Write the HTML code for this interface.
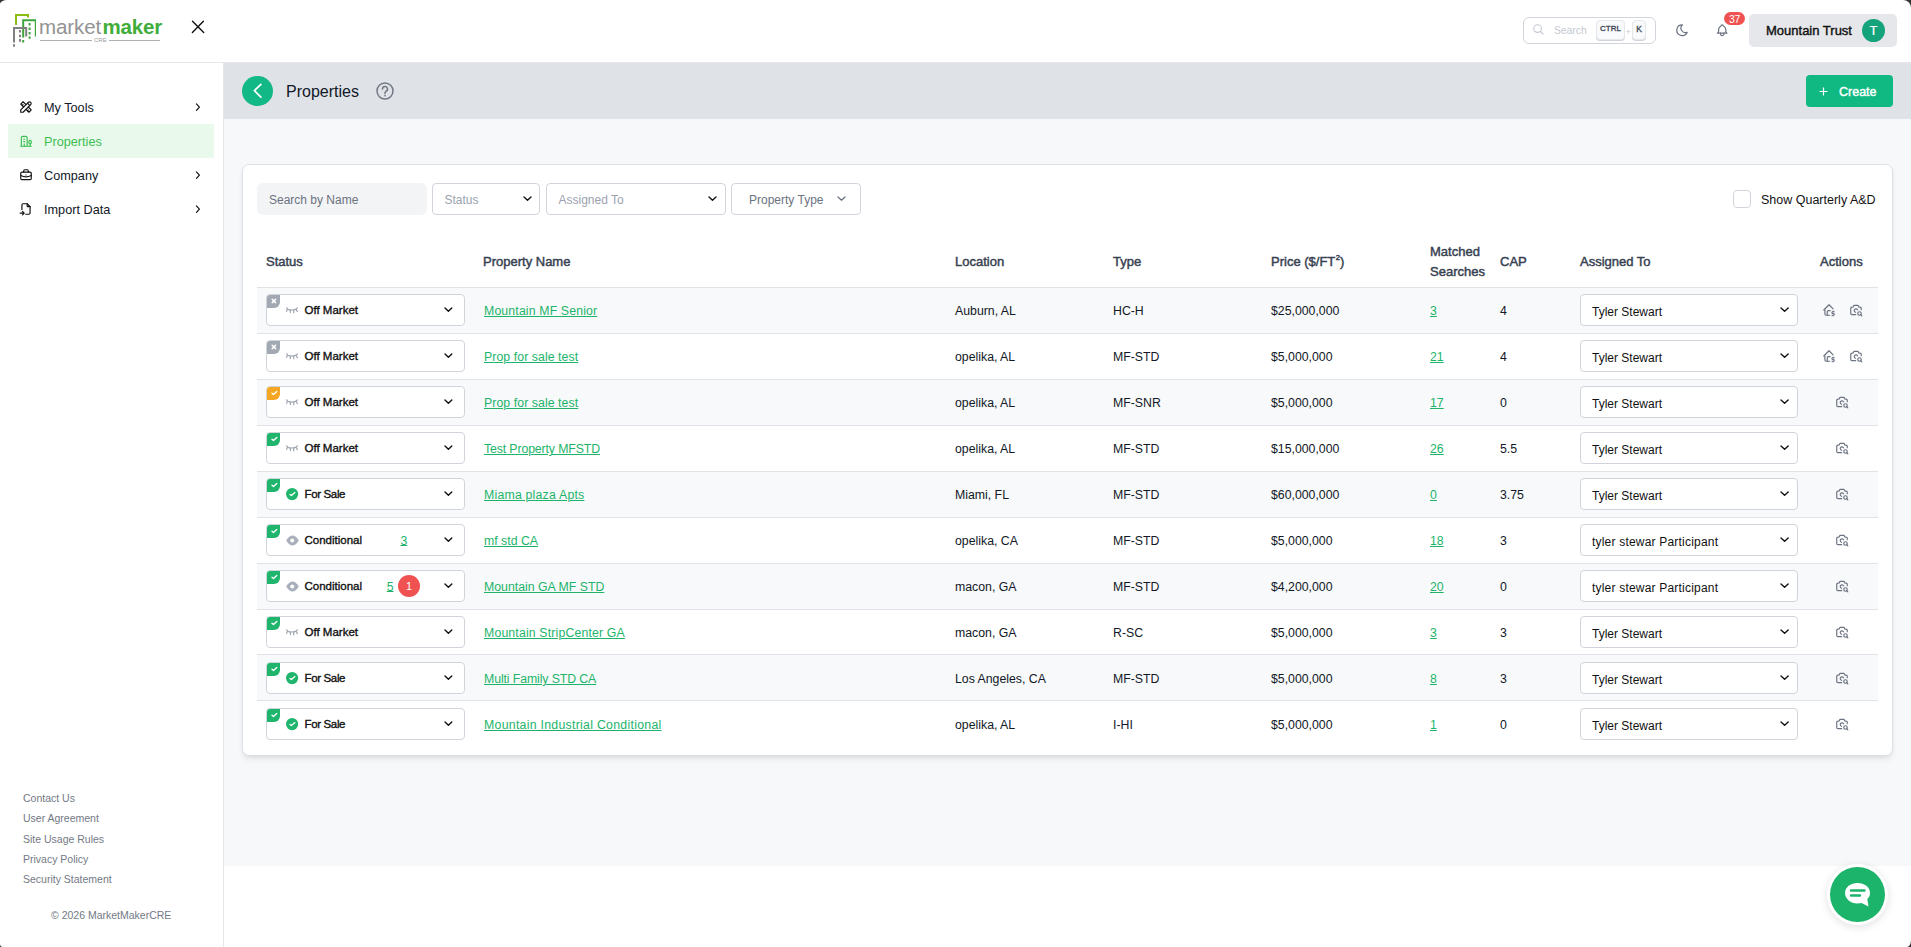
<!DOCTYPE html><html><head><meta charset="utf-8"><style>
*{box-sizing:border-box;margin:0;padding:0}
html,body{width:1911px;height:947px;overflow:hidden;background:#fff;font-family:"Liberation Sans",sans-serif;color:#111827}
body{position:relative}
.a{position:absolute}
svg{display:block}
.hdr{left:0;top:0;width:1911px;height:63px;border-bottom:1px solid #e5e7eb;background:#fff}
.side{left:0;top:63px;width:224px;height:884px;border-right:1px solid #e5e7eb;background:#fff}
.main{left:224px;top:63px;width:1687px;height:803px;background:#f7f8fa}
.band{left:224px;top:63px;width:1687px;height:56px;background:#dfe2e7}
.nav{left:8px;width:206px;height:34px}
.nav .ic{position:absolute;left:11px;top:10px}
.nav .tx{position:absolute;left:36px;top:0;height:34px;padding-top:2px;display:flex;align-items:center;font-size:12.7px;color:#111827}
.nav .chev{position:absolute;left:187px;top:13.2px}
.nav.act{background:#e9f9ec}
.nav.act .tx{color:#3cbf52}
.foot{left:23px;font-size:10.5px;color:#737985;height:14px;display:flex;align-items:center;white-space:nowrap}
.card{left:242px;top:164px;width:1651px;height:592px;background:#fff;border:1px solid #dde0e5;border-radius:7px;box-shadow:0 4px 6px -1px rgba(0,0,0,.08),0 2px 4px -2px rgba(0,0,0,.08)}
.flt{top:183px;height:32px;border:1px solid #d1d5db;border-radius:4px;background:#fff;font-size:12px;color:#9ca3af}
.flt .t{position:absolute;left:11.5px;top:0;height:30px;padding-top:2px;display:flex;align-items:center;white-space:nowrap}
.flt .dd{position:absolute;top:13px}
.th{font-size:13px;font-weight:400;-webkit-text-stroke:0.45px #374151;color:#374151;height:20px;padding-top:0px;display:flex;align-items:center;white-space:nowrap}
.row{left:257px;width:1621px;height:46px;border-top:1px solid transparent}
.ln{left:257px;width:1621px;height:1px;background:#dfe3e8}
.stripe{left:257px;width:1621px;background:#f8f9fa}
.cell{position:absolute;top:0;height:44.875px;padding-top:2px;display:flex;align-items:center;font-size:12.3px;color:#111827;white-space:nowrap}
.lnk{color:#1db46a;text-decoration:underline;text-underline-offset:1px;text-decoration-thickness:1px}
.sel{position:absolute;top:6px;left:9px;width:199px;height:32px;border:1px solid #d1d5db;border-radius:4px;background:#fff}
.sel .cb{position:absolute;left:0;top:0;width:13px;height:12.5px;border-radius:3px 0 6px 0;overflow:hidden}
.sel .st{position:absolute;left:37.5px;top:0;height:30px;padding-top:0px;display:flex;align-items:center;font-size:11.5px;font-weight:400;-webkit-text-stroke:0.35px #111;color:#111;white-space:nowrap}
.sel .si{position:absolute;left:19px;top:9px}
.sel .dd{position:absolute;left:178px;top:12px}
.asg{position:absolute;top:6px;left:1323px;width:218px;height:32px;border:1px solid #d1d5db;border-radius:4px;background:#fff}
.asg .t{position:absolute;left:11px;top:0;height:30px;padding-top:4px;display:flex;align-items:center;font-size:12px;color:#111;white-space:nowrap}
.asg .dd{position:absolute;left:200px;top:12px}
.act1{position:absolute;top:14.8px}
</style></head><body>
<div class="a hdr"></div><div class="a side"></div><div class="a main"></div><div class="a band"></div>
<svg class="a" style="left:12px;top:13px" width="24" height="35" viewBox="12 13 24 35">
<path d="M16 25 V15 H28 V17.5" fill="none" stroke="#8cbd12" stroke-width="2"/>
<path d="M23.2 37.5 V20.2 H35.8 V36.5" fill="none" stroke="#3da53a" stroke-width="2"/>
<path d="M29.6 23 V25.5 M29.6 27.5 V30 M29.6 32 V34.5 M29.6 36.5 V38.7 M23.2 40 V42.6" stroke="#3da53a" stroke-width="2"/>
<path d="M14 42.6 V27.9 H26.2 V36.5" fill="none" stroke="#808080" stroke-width="2"/>
<path d="M20 30 V32.6 M20 34.7 V37.3 M20 39.1 V41.7 M14 44.2 V46.8" stroke="#808080" stroke-width="2"/>
</svg>
<div class="a" style="left:39px;top:14px;height:26px;white-space:nowrap;font-size:20.5px;line-height:26px;letter-spacing:-0.1px;color:#939393">market</div>
<div class="a" style="left:102.5px;top:14px;height:26px;white-space:nowrap;font-size:20.5px;line-height:26px;letter-spacing:-0.2px;color:#40ad3b;font-weight:700">maker</div>
<div class="a" style="left:40px;top:40px;width:52px;height:1px;background:#b0b0b0"></div>
<div class="a" style="left:109px;top:40px;width:51px;height:1px;background:#b0b0b0"></div>
<div class="a" style="left:94px;top:37px;font-size:6px;line-height:6px;color:#9a9a9a;letter-spacing:0">CRE</div>

<svg class="a" style="left:190px;top:20px" width="15" height="15" viewBox="0 0 15 15"><path d="M2.5 1.3 L13.7 12.5 M13.4 1.3 L2.4 12.6" stroke="#111" stroke-width="1.4" stroke-linecap="round"/></svg>
<div class="a nav" style="top:90px"><div class="ic"><svg width="14" height="14" viewBox="0 0 24 24" fill="none" stroke="#111" stroke-width="2" stroke-linecap="round" stroke-linejoin="round"><path d="M3 21h4l13 -13a1.5 1.5 0 0 0 -4 -4l-13 13v4"/><path d="M14.5 5.5l4 4"/><path d="M12 8l-5 -5l-4 4l5 5"/><path d="M7 8l-1.5 1.5"/><path d="M16 12l5 5l-4 4l-5 -5"/><path d="M16 17l-1.5 1.5"/></svg></div><div class="tx">My Tools</div><div class="chev"><svg width="8" height="10" viewBox="0 0 8 10"><path d="M1.4 0.9 L4.4 4.1 L1.5 7.3" fill="none" stroke="#111" stroke-width="1.2" stroke-linecap="round" stroke-linejoin="round"/></svg></div></div>
<div class="a nav act" style="top:124px"><div class="ic"><svg width="14" height="14" viewBox="0 0 24 24" fill="none" stroke="#3cbf52" stroke-width="2" stroke-linecap="round" stroke-linejoin="round"><path d="M3 21h18"/><path d="M19 21v-4"/><path d="M19 17a2 2 0 0 0 2 -2v-2a2 2 0 1 0 -4 0v2a2 2 0 0 0 2 2z"/><path d="M14 21v-14a3 3 0 0 0 -3 -3h-4a3 3 0 0 0 -3 3v14"/><path d="M9 17v4"/><path d="M8 13h2"/><path d="M8 9h2"/></svg></div><div class="tx">Properties</div></div>
<div class="a nav" style="top:158px"><div class="ic"><svg width="14" height="14" viewBox="0 0 24 24" fill="none" stroke="#111" stroke-width="2" stroke-linecap="round" stroke-linejoin="round"><path d="M3 9a2 2 0 0 1 2 -2h14a2 2 0 0 1 2 2v9a2 2 0 0 1 -2 2h-14a2 2 0 0 1 -2 -2z"/><path d="M8 7v-2a2 2 0 0 1 2 -2h4a2 2 0 0 1 2 2v2"/><path d="M12 12l0 .01"/><path d="M3 13a20 20 0 0 0 18 0"/></svg></div><div class="tx">Company</div><div class="chev"><svg width="8" height="10" viewBox="0 0 8 10"><path d="M1.4 0.9 L4.4 4.1 L1.5 7.3" fill="none" stroke="#111" stroke-width="1.2" stroke-linecap="round" stroke-linejoin="round"/></svg></div></div>
<div class="a nav" style="top:192px"><div class="ic"><svg width="14" height="14" viewBox="0 0 24 24" fill="none" stroke="#111" stroke-width="2" stroke-linecap="round" stroke-linejoin="round"><path d="M14 3v4a1 1 0 0 0 1 1h4"/><path d="M5 13v-8a2 2 0 0 1 2 -2h7l5 5v11a2 2 0 0 1 -2 2h-5.5m-9.5 -2h7m-3 -3l3 3l-3 3"/></svg></div><div class="tx">Import Data</div><div class="chev"><svg width="8" height="10" viewBox="0 0 8 10"><path d="M1.4 0.9 L4.4 4.1 L1.5 7.3" fill="none" stroke="#111" stroke-width="1.2" stroke-linecap="round" stroke-linejoin="round"/></svg></div></div>
<div class="a foot" style="top:791px">Contact Us</div>
<div class="a foot" style="top:811px">User Agreement</div>
<div class="a foot" style="top:832px">Site Usage Rules</div>
<div class="a foot" style="top:852px">Privacy Policy</div>
<div class="a foot" style="top:872px">Security Statement</div>
<div class="a foot" style="left:51px;top:908px">© 2026 MarketMakerCRE</div>
<div class="a" style="left:1523px;top:17px;width:133px;height:27px;border:1px solid #d1d5db;border-radius:6px;background:#fff"></div>
<svg class="a" style="left:1533px;top:24px" width="11" height="11" viewBox="0 0 11 11"><circle cx="4.6" cy="4.6" r="3.8" fill="none" stroke="#c4c9d0" stroke-width="1.1"/><path d="M7.5 7.5 L10.2 10.2" stroke="#c4c9d0" stroke-width="1.1" stroke-linecap="round"/></svg>
<div class="a" style="left:1554px;top:21px;height:18px;display:flex;align-items:center;font-size:10.3px;color:#c4c9d0;padding-top:1px">Search</div>
<div class="a" style="left:1596px;top:20px;width:29px;height:20px;border:1px solid #e5e7eb;border-radius:4px;background:#f9fafb;box-shadow:0 1px 0 #d1d5db;display:flex;align-items:center;justify-content:center;font-size:8px;-webkit-text-stroke:0.3px #374151;color:#374151;padding-bottom:3px">CTRL</div>
<div class="a" style="left:1625.5px;top:22px;height:18px;display:flex;align-items:center;font-size:9.5px;color:#c9ced6">+</div>
<div class="a" style="left:1632px;top:20px;width:14px;height:20px;border:1px solid #e5e7eb;border-radius:4px;background:#f9fafb;box-shadow:0 1px 0 #d1d5db;display:flex;align-items:center;justify-content:center;font-size:8.5px;-webkit-text-stroke:0.3px #374151;color:#374151;padding-bottom:3px">K</div>
<svg class="a" style="left:1675px;top:22.8px" width="14.4" height="14.4" viewBox="0 0 24 24" fill="none" stroke="#6b7280" stroke-width="2" stroke-linecap="round" stroke-linejoin="round"><path d="M12 3c.132 0 .263 0 .393 0a7.5 7.5 0 0 0 7.92 12.446a9 9 0 1 1 -8.313 -12.454z"/></svg>
<svg class="a" style="left:1715.2px;top:22.8px" width="14.4" height="14.4" viewBox="0 0 24 24" fill="none" stroke="#6b7280" stroke-width="2" stroke-linecap="round" stroke-linejoin="round"><path d="M10 5a2 2 0 1 1 4 0a7 7 0 0 1 4 6v3a4 4 0 0 0 2 3h-16a4 4 0 0 0 2 -3v-3a7 7 0 0 1 4 -6"/><path d="M9 17v1a3 3 0 0 0 6 0v-1"/></svg>
<div class="a" style="left:1724px;top:11.5px;width:21px;height:13.5px;border-radius:7px;background:#f05252;color:#fff;font-size:10.5px;padding-top:1px;display:flex;align-items:center;justify-content:center;letter-spacing:-0.3px">37</div>
<div class="a" style="left:1749px;top:14px;width:148px;height:33px;border-radius:5px;background:#e5e7eb"></div>
<div class="a" style="left:1766px;top:20px;height:20px;padding-top:0px;display:flex;align-items:center;font-size:13px;-webkit-text-stroke:0.4px #111;color:#111;white-space:nowrap">Mountain Trust</div>
<div class="a" style="left:1862px;top:19px;width:23px;height:23px;border-radius:50%;background:#14a37b;color:#fff;font-size:13px;-webkit-text-stroke:0.2px #fff;padding-bottom:1px;display:flex;align-items:center;justify-content:center">T</div>

<div class="a" style="left:242px;top:76px;width:31px;height:30.4px;border-radius:50%;background:#12b886"></div>
<svg class="a" style="left:252px;top:83px" width="11" height="16" viewBox="0 0 11 16"><path d="M8.9 1.4 L2.4 7.65 L8.9 14.1" fill="none" stroke="#fff" stroke-width="1.7" stroke-linecap="round" stroke-linejoin="round"/></svg>
<div class="a" style="left:286px;top:80px;height:22px;padding-top:2px;display:flex;align-items:center;font-size:16px;color:#111827;white-space:nowrap">Properties</div>
<svg class="a" style="left:376px;top:82px" width="18" height="18" viewBox="0 0 18 18"><circle cx="9" cy="9" r="8" fill="none" stroke="#727882" stroke-width="1.5"/><path d="M6.5 7 a2.5 2.5 0 1 1 3.5 2.3 c-0.7 0.4 -1 0.8 -1 1.6 v0.5" fill="none" stroke="#727882" stroke-width="1.5" stroke-linecap="round"/><circle cx="9" cy="13.6" r="0.85" fill="#727882"/></svg>
<div class="a" style="left:1806px;top:75px;width:87px;height:32px;border-radius:4px;background:#10b981"></div>
<svg class="a" style="left:1819px;top:87px" width="9" height="9" viewBox="0 0 9 9"><path d="M4.5 0.5 V8.5 M0.5 4.5 H8.5" stroke="#fff" stroke-width="1.2"/></svg>
<div class="a" style="left:1839px;top:81px;height:20px;padding-top:2px;display:flex;align-items:center;font-size:12.5px;-webkit-text-stroke:0.4px #fff;color:#fff;white-space:nowrap">Create</div>

<div class="a card"></div>
<div class="a" style="left:257px;top:183px;width:170px;height:32px;border-radius:6px;background:#f3f4f6"><div class="a" style="left:12px;top:0;height:32px;padding-top:2px;display:flex;align-items:center;font-size:12px;color:#6b7280;white-space:nowrap">Search by Name</div></div>
<div class="a flt" style="left:432px;width:108px"><div class="t">Status</div><svg class="a" style="left:87.5px;top:10.4px" width="13" height="9.2" viewBox="0 0 13 9.2"><path d="M3 3 L6.5 6.2 L10 3" fill="none" stroke="#111" stroke-width="1.4" stroke-linecap="round" stroke-linejoin="round"/></svg></div>
<div class="a flt" style="left:546px;width:180px"><div class="t">Assigned To</div><svg class="a" style="left:158.5px;top:10.4px" width="13" height="9.2" viewBox="0 0 13 9.2"><path d="M3 3 L6.5 6.2 L10 3" fill="none" stroke="#111" stroke-width="1.4" stroke-linecap="round" stroke-linejoin="round"/></svg></div>
<div class="a flt" style="left:731px;width:130px;color:#6b7280"><div class="t" style="left:17px">Property Type</div><svg class="a" style="left:102.5px;top:10.4px" width="13" height="9.2" viewBox="0 0 13 9.2"><path d="M3 3 L6.5 6.2 L10 3" fill="none" stroke="#6b7280" stroke-width="1.3" stroke-linecap="round" stroke-linejoin="round"/></svg></div>
<div class="a" style="left:1733px;top:190px;width:18px;height:18px;border:1px solid #d1d5db;border-radius:4px;background:#fff"></div>
<div class="a" style="left:1761px;top:189px;height:20px;padding-top:2px;display:flex;align-items:center;font-size:12.5px;color:#111;white-space:nowrap">Show Quarterly A&amp;D</div>
<div class="a th" style="left:266px;top:251px">Status</div>
<div class="a th" style="left:483px;top:251px">Property Name</div>
<div class="a th" style="left:955px;top:251px">Location</div>
<div class="a th" style="left:1113px;top:251px">Type</div>
<div class="a th" style="left:1271px;top:251px"><span>Price ($/FT<span style="font-size:7.5px;position:relative;top:-5.5px;margin-left:0.5px">2</span>)</span></div>
<div class="a th" style="left:1500px;top:251px">CAP</div>
<div class="a th" style="left:1580px;top:251px">Assigned To</div>
<div class="a th" style="left:1820px;top:251px">Actions</div>
<div class="a th" style="left:1430px;top:241px">Matched</div><div class="a th" style="left:1430px;top:261px">Searches</div>
<div class="a stripe" style="top:288px;height:45px"></div>
<div class="a ln" style="top:287px"></div>
<div class="a row" style="top:287px"><div class="sel"><div class="cb" style="background:#a3a9b3"><svg width="13" height="13" viewBox="0 0 13 13"><path d="M5.2 4.3 L8.6 7.6 M8.6 4.3 L5.2 7.6" stroke="#fff" stroke-width="1.5" stroke-linecap="round"/></svg></div><div class="si" style="top:11px;left:18px"><svg width="14" height="9" viewBox="0 0 14 9" fill="none" stroke="#9ca3af" stroke-width="1.15" stroke-linecap="round" stroke-linejoin="round"><path d="M2.4 3.2 Q6.7 4.8 11 3.2"/><path d="M1.8 1.8 L2.4 3.2 L1.6 5.4 M12.4 1.9 L11 3.2 L12.4 5.6 M5.4 4.1 V6.6 M8.8 4.1 V6.8"/></svg></div><div class="st" style="">Off Market</div><svg class="a" style="left:175.2px;top:10px" width="12.8" height="9.3" viewBox="0 0 12.8 9.3"><path d="M3 3 L6.4 6.3 L9.8 3" fill="none" stroke="#111" stroke-width="1.4" stroke-linecap="round" stroke-linejoin="round"/></svg></div><div class="cell" style="left:227px"><span class="lnk" style="letter-spacing:0.14px">Mountain MF Senior</span></div><div class="cell" style="left:698px">Auburn, AL</div><div class="cell" style="left:856px">HC-H</div><div class="cell" style="left:1014px">$25,000,000</div><div class="cell" style="left:1173px"><span class="lnk">3</span></div><div class="cell" style="left:1243px">4</div><div class="asg"><div class="t" style="letter-spacing:0px">Tyler Stewart</div><svg class="a" style="left:197.4px;top:10.2px" width="13.2" height="9.3" viewBox="0 0 13.2 9.3"><path d="M3 3 L6.6 6.3 L10.2 3" fill="none" stroke="#111" stroke-width="1.4" stroke-linecap="round" stroke-linejoin="round"/></svg></div><div class="act1" style="left:1564.85px"><svg width="14" height="14" viewBox="0 0 24 24" fill="none" stroke="#6b7280" stroke-width="2" stroke-linecap="round" stroke-linejoin="round"><path d="M19 10l-7 -7l-9 9h2v7a2 2 0 0 0 2 2h6"/><path d="M9 21v-6a2 2 0 0 1 2 -2h2c.387 0 .748 .11 1.054 .3"/><path d="M21 15h-2.5a1.5 1.5 0 0 0 0 3h1a1.5 1.5 0 0 1 0 3h-2.5"/><path d="M19 21v1m0 -8v1"/></svg></div><div class="act1" style="left:1591.85px"><svg width="14" height="14" viewBox="0 0 24 24" fill="none" stroke="#6b7280" stroke-width="2" stroke-linecap="round" stroke-linejoin="round"><path d="M11.5 20h-6.5a2 2 0 0 1 -2 -2v-9a2 2 0 0 1 2 -2h1a2 2 0 0 0 2 -2a1 1 0 0 1 1 -1h6a1 1 0 0 1 1 1a2 2 0 0 0 2 2h1a2 2 0 0 1 2 2v2.5"/><path d="M14.757 11.815a3 3 0 1 0 -3.431 4.109"/><path d="M18 18m-3 0a3 3 0 1 0 6 0a3 3 0 1 0 -6 0"/><path d="M20.2 20.2l1.8 1.8"/></svg></div></div>
<div class="a ln" style="top:333px"></div>
<div class="a row" style="top:333px"><div class="sel"><div class="cb" style="background:#a3a9b3"><svg width="13" height="13" viewBox="0 0 13 13"><path d="M5.2 4.3 L8.6 7.6 M8.6 4.3 L5.2 7.6" stroke="#fff" stroke-width="1.5" stroke-linecap="round"/></svg></div><div class="si" style="top:11px;left:18px"><svg width="14" height="9" viewBox="0 0 14 9" fill="none" stroke="#9ca3af" stroke-width="1.15" stroke-linecap="round" stroke-linejoin="round"><path d="M2.4 3.2 Q6.7 4.8 11 3.2"/><path d="M1.8 1.8 L2.4 3.2 L1.6 5.4 M12.4 1.9 L11 3.2 L12.4 5.6 M5.4 4.1 V6.6 M8.8 4.1 V6.8"/></svg></div><div class="st" style="">Off Market</div><svg class="a" style="left:175.2px;top:10px" width="12.8" height="9.3" viewBox="0 0 12.8 9.3"><path d="M3 3 L6.4 6.3 L9.8 3" fill="none" stroke="#111" stroke-width="1.4" stroke-linecap="round" stroke-linejoin="round"/></svg></div><div class="cell" style="left:227px"><span class="lnk" style="letter-spacing:0.07px">Prop for sale test</span></div><div class="cell" style="left:698px">opelika, AL</div><div class="cell" style="left:856px">MF-STD</div><div class="cell" style="left:1014px">$5,000,000</div><div class="cell" style="left:1173px"><span class="lnk">21</span></div><div class="cell" style="left:1243px">4</div><div class="asg"><div class="t" style="letter-spacing:0px">Tyler Stewart</div><svg class="a" style="left:197.4px;top:10.2px" width="13.2" height="9.3" viewBox="0 0 13.2 9.3"><path d="M3 3 L6.6 6.3 L10.2 3" fill="none" stroke="#111" stroke-width="1.4" stroke-linecap="round" stroke-linejoin="round"/></svg></div><div class="act1" style="left:1564.85px"><svg width="14" height="14" viewBox="0 0 24 24" fill="none" stroke="#6b7280" stroke-width="2" stroke-linecap="round" stroke-linejoin="round"><path d="M19 10l-7 -7l-9 9h2v7a2 2 0 0 0 2 2h6"/><path d="M9 21v-6a2 2 0 0 1 2 -2h2c.387 0 .748 .11 1.054 .3"/><path d="M21 15h-2.5a1.5 1.5 0 0 0 0 3h1a1.5 1.5 0 0 1 0 3h-2.5"/><path d="M19 21v1m0 -8v1"/></svg></div><div class="act1" style="left:1591.85px"><svg width="14" height="14" viewBox="0 0 24 24" fill="none" stroke="#6b7280" stroke-width="2" stroke-linecap="round" stroke-linejoin="round"><path d="M11.5 20h-6.5a2 2 0 0 1 -2 -2v-9a2 2 0 0 1 2 -2h1a2 2 0 0 0 2 -2a1 1 0 0 1 1 -1h6a1 1 0 0 1 1 1a2 2 0 0 0 2 2h1a2 2 0 0 1 2 2v2.5"/><path d="M14.757 11.815a3 3 0 1 0 -3.431 4.109"/><path d="M18 18m-3 0a3 3 0 1 0 6 0a3 3 0 1 0 -6 0"/><path d="M20.2 20.2l1.8 1.8"/></svg></div></div>
<div class="a stripe" style="top:380px;height:45px"></div>
<div class="a ln" style="top:379px"></div>
<div class="a row" style="top:379px"><div class="sel"><div class="cb" style="background:#f5a623"><svg width="13" height="13" viewBox="0 0 13 13"><path d="M5 6.2 L6.5 7.5 L9.8 4.5" fill="none" stroke="#fff" stroke-width="1.35" stroke-linecap="round" stroke-linejoin="round"/></svg></div><div class="si" style="top:11px;left:18px"><svg width="14" height="9" viewBox="0 0 14 9" fill="none" stroke="#9ca3af" stroke-width="1.15" stroke-linecap="round" stroke-linejoin="round"><path d="M2.4 3.2 Q6.7 4.8 11 3.2"/><path d="M1.8 1.8 L2.4 3.2 L1.6 5.4 M12.4 1.9 L11 3.2 L12.4 5.6 M5.4 4.1 V6.6 M8.8 4.1 V6.8"/></svg></div><div class="st" style="">Off Market</div><svg class="a" style="left:175.2px;top:10px" width="12.8" height="9.3" viewBox="0 0 12.8 9.3"><path d="M3 3 L6.4 6.3 L9.8 3" fill="none" stroke="#111" stroke-width="1.4" stroke-linecap="round" stroke-linejoin="round"/></svg></div><div class="cell" style="left:227px"><span class="lnk" style="letter-spacing:0.07px">Prop for sale test</span></div><div class="cell" style="left:698px">opelika, AL</div><div class="cell" style="left:856px">MF-SNR</div><div class="cell" style="left:1014px">$5,000,000</div><div class="cell" style="left:1173px"><span class="lnk">17</span></div><div class="cell" style="left:1243px">0</div><div class="asg"><div class="t" style="letter-spacing:0px">Tyler Stewart</div><svg class="a" style="left:197.4px;top:10.2px" width="13.2" height="9.3" viewBox="0 0 13.2 9.3"><path d="M3 3 L6.6 6.3 L10.2 3" fill="none" stroke="#111" stroke-width="1.4" stroke-linecap="round" stroke-linejoin="round"/></svg></div><div class="act1" style="left:1577.85px"><svg width="14" height="14" viewBox="0 0 24 24" fill="none" stroke="#6b7280" stroke-width="2" stroke-linecap="round" stroke-linejoin="round"><path d="M11.5 20h-6.5a2 2 0 0 1 -2 -2v-9a2 2 0 0 1 2 -2h1a2 2 0 0 0 2 -2a1 1 0 0 1 1 -1h6a1 1 0 0 1 1 1a2 2 0 0 0 2 2h1a2 2 0 0 1 2 2v2.5"/><path d="M14.757 11.815a3 3 0 1 0 -3.431 4.109"/><path d="M18 18m-3 0a3 3 0 1 0 6 0a3 3 0 1 0 -6 0"/><path d="M20.2 20.2l1.8 1.8"/></svg></div></div>
<div class="a ln" style="top:425px"></div>
<div class="a row" style="top:425px"><div class="sel"><div class="cb" style="background:#1fb56c"><svg width="13" height="13" viewBox="0 0 13 13"><path d="M5 6.2 L6.5 7.5 L9.8 4.5" fill="none" stroke="#fff" stroke-width="1.35" stroke-linecap="round" stroke-linejoin="round"/></svg></div><div class="si" style="top:11px;left:18px"><svg width="14" height="9" viewBox="0 0 14 9" fill="none" stroke="#9ca3af" stroke-width="1.15" stroke-linecap="round" stroke-linejoin="round"><path d="M2.4 3.2 Q6.7 4.8 11 3.2"/><path d="M1.8 1.8 L2.4 3.2 L1.6 5.4 M12.4 1.9 L11 3.2 L12.4 5.6 M5.4 4.1 V6.6 M8.8 4.1 V6.8"/></svg></div><div class="st" style="">Off Market</div><svg class="a" style="left:175.2px;top:10px" width="12.8" height="9.3" viewBox="0 0 12.8 9.3"><path d="M3 3 L6.4 6.3 L9.8 3" fill="none" stroke="#111" stroke-width="1.4" stroke-linecap="round" stroke-linejoin="round"/></svg></div><div class="cell" style="left:227px"><span class="lnk" style="letter-spacing:-0.12px">Test Property MFSTD</span></div><div class="cell" style="left:698px">opelika, AL</div><div class="cell" style="left:856px">MF-STD</div><div class="cell" style="left:1014px">$15,000,000</div><div class="cell" style="left:1173px"><span class="lnk">26</span></div><div class="cell" style="left:1243px">5.5</div><div class="asg"><div class="t" style="letter-spacing:0px">Tyler Stewart</div><svg class="a" style="left:197.4px;top:10.2px" width="13.2" height="9.3" viewBox="0 0 13.2 9.3"><path d="M3 3 L6.6 6.3 L10.2 3" fill="none" stroke="#111" stroke-width="1.4" stroke-linecap="round" stroke-linejoin="round"/></svg></div><div class="act1" style="left:1577.85px"><svg width="14" height="14" viewBox="0 0 24 24" fill="none" stroke="#6b7280" stroke-width="2" stroke-linecap="round" stroke-linejoin="round"><path d="M11.5 20h-6.5a2 2 0 0 1 -2 -2v-9a2 2 0 0 1 2 -2h1a2 2 0 0 0 2 -2a1 1 0 0 1 1 -1h6a1 1 0 0 1 1 1a2 2 0 0 0 2 2h1a2 2 0 0 1 2 2v2.5"/><path d="M14.757 11.815a3 3 0 1 0 -3.431 4.109"/><path d="M18 18m-3 0a3 3 0 1 0 6 0a3 3 0 1 0 -6 0"/><path d="M20.2 20.2l1.8 1.8"/></svg></div></div>
<div class="a stripe" style="top:472px;height:45px"></div>
<div class="a ln" style="top:471px"></div>
<div class="a row" style="top:471px"><div class="sel"><div class="cb" style="background:#1fb56c"><svg width="13" height="13" viewBox="0 0 13 13"><path d="M5 6.2 L6.5 7.5 L9.8 4.5" fill="none" stroke="#fff" stroke-width="1.35" stroke-linecap="round" stroke-linejoin="round"/></svg></div><div class="si" style="top:8.5px;left:19px"><svg width="13" height="13" viewBox="0 0 13 13"><circle cx="6.1" cy="6.1" r="6.1" fill="#1fb56c"/><path d="M4 6.4 L5.4 7.6 L8.9 4.6" fill="none" stroke="#fff" stroke-width="1.3" stroke-linecap="round" stroke-linejoin="round"/></svg></div><div class="st" style="letter-spacing:-0.35px">For Sale</div><svg class="a" style="left:175.2px;top:10px" width="12.8" height="9.3" viewBox="0 0 12.8 9.3"><path d="M3 3 L6.4 6.3 L9.8 3" fill="none" stroke="#111" stroke-width="1.4" stroke-linecap="round" stroke-linejoin="round"/></svg></div><div class="cell" style="left:227px"><span class="lnk" style="letter-spacing:0.21px">Miama plaza Apts</span></div><div class="cell" style="left:698px">Miami, FL</div><div class="cell" style="left:856px">MF-STD</div><div class="cell" style="left:1014px">$60,000,000</div><div class="cell" style="left:1173px"><span class="lnk">0</span></div><div class="cell" style="left:1243px">3.75</div><div class="asg"><div class="t" style="letter-spacing:0px">Tyler Stewart</div><svg class="a" style="left:197.4px;top:10.2px" width="13.2" height="9.3" viewBox="0 0 13.2 9.3"><path d="M3 3 L6.6 6.3 L10.2 3" fill="none" stroke="#111" stroke-width="1.4" stroke-linecap="round" stroke-linejoin="round"/></svg></div><div class="act1" style="left:1577.85px"><svg width="14" height="14" viewBox="0 0 24 24" fill="none" stroke="#6b7280" stroke-width="2" stroke-linecap="round" stroke-linejoin="round"><path d="M11.5 20h-6.5a2 2 0 0 1 -2 -2v-9a2 2 0 0 1 2 -2h1a2 2 0 0 0 2 -2a1 1 0 0 1 1 -1h6a1 1 0 0 1 1 1a2 2 0 0 0 2 2h1a2 2 0 0 1 2 2v2.5"/><path d="M14.757 11.815a3 3 0 1 0 -3.431 4.109"/><path d="M18 18m-3 0a3 3 0 1 0 6 0a3 3 0 1 0 -6 0"/><path d="M20.2 20.2l1.8 1.8"/></svg></div></div>
<div class="a ln" style="top:517px"></div>
<div class="a row" style="top:517px"><div class="sel"><div class="cb" style="background:#1fb56c"><svg width="13" height="13" viewBox="0 0 13 13"><path d="M5 6.2 L6.5 7.5 L9.8 4.5" fill="none" stroke="#fff" stroke-width="1.35" stroke-linecap="round" stroke-linejoin="round"/></svg></div><div class="si" style="top:9.8px;left:19px"><svg width="13" height="11" viewBox="0 0 13 11"><path d="M0.2 5.4 Q6.5 -4.6 12.8 5.4 Q6.5 15.4 0.2 5.4z" fill="#a8afba"/><circle cx="6.2" cy="5.5" r="2" fill="#fff"/></svg></div><div class="st" style="">Conditional</div><div class="a" style="left:133.4px;top:0;height:30px;padding-top:2px;display:flex;align-items:center;font-size:12.3px"><span class="lnk" style="text-underline-offset:0px">3</span></div><svg class="a" style="left:175.2px;top:10px" width="12.8" height="9.3" viewBox="0 0 12.8 9.3"><path d="M3 3 L6.4 6.3 L9.8 3" fill="none" stroke="#111" stroke-width="1.4" stroke-linecap="round" stroke-linejoin="round"/></svg></div><div class="cell" style="left:227px"><span class="lnk" style="letter-spacing:0px">mf std CA</span></div><div class="cell" style="left:698px">opelika, CA</div><div class="cell" style="left:856px">MF-STD</div><div class="cell" style="left:1014px">$5,000,000</div><div class="cell" style="left:1173px"><span class="lnk">18</span></div><div class="cell" style="left:1243px">3</div><div class="asg"><div class="t" style="letter-spacing:0.2px">tyler stewar Participant</div><svg class="a" style="left:197.4px;top:10.2px" width="13.2" height="9.3" viewBox="0 0 13.2 9.3"><path d="M3 3 L6.6 6.3 L10.2 3" fill="none" stroke="#111" stroke-width="1.4" stroke-linecap="round" stroke-linejoin="round"/></svg></div><div class="act1" style="left:1577.85px"><svg width="14" height="14" viewBox="0 0 24 24" fill="none" stroke="#6b7280" stroke-width="2" stroke-linecap="round" stroke-linejoin="round"><path d="M11.5 20h-6.5a2 2 0 0 1 -2 -2v-9a2 2 0 0 1 2 -2h1a2 2 0 0 0 2 -2a1 1 0 0 1 1 -1h6a1 1 0 0 1 1 1a2 2 0 0 0 2 2h1a2 2 0 0 1 2 2v2.5"/><path d="M14.757 11.815a3 3 0 1 0 -3.431 4.109"/><path d="M18 18m-3 0a3 3 0 1 0 6 0a3 3 0 1 0 -6 0"/><path d="M20.2 20.2l1.8 1.8"/></svg></div></div>
<div class="a stripe" style="top:564px;height:45px"></div>
<div class="a ln" style="top:563px"></div>
<div class="a row" style="top:563px"><div class="sel"><div class="cb" style="background:#1fb56c"><svg width="13" height="13" viewBox="0 0 13 13"><path d="M5 6.2 L6.5 7.5 L9.8 4.5" fill="none" stroke="#fff" stroke-width="1.35" stroke-linecap="round" stroke-linejoin="round"/></svg></div><div class="si" style="top:9.8px;left:19px"><svg width="13" height="11" viewBox="0 0 13 11"><path d="M0.2 5.4 Q6.5 -4.6 12.8 5.4 Q6.5 15.4 0.2 5.4z" fill="#a8afba"/><circle cx="6.2" cy="5.5" r="2" fill="#fff"/></svg></div><div class="st" style="">Conditional</div><div class="a" style="left:119.7px;top:0;height:30px;padding-top:2px;display:flex;align-items:center;font-size:12.3px"><span class="lnk" style="text-underline-offset:0px">5</span></div><div class="a" style="left:131px;top:4px;width:22px;height:22px;border-radius:11px;background:#f05252;color:#fff;font-size:11px;display:flex;align-items:center;justify-content:center">1</div><svg class="a" style="left:175.2px;top:10px" width="12.8" height="9.3" viewBox="0 0 12.8 9.3"><path d="M3 3 L6.4 6.3 L9.8 3" fill="none" stroke="#111" stroke-width="1.4" stroke-linecap="round" stroke-linejoin="round"/></svg></div><div class="cell" style="left:227px"><span class="lnk" style="letter-spacing:0px">Mountain GA MF STD</span></div><div class="cell" style="left:698px">macon, GA</div><div class="cell" style="left:856px">MF-STD</div><div class="cell" style="left:1014px">$4,200,000</div><div class="cell" style="left:1173px"><span class="lnk">20</span></div><div class="cell" style="left:1243px">0</div><div class="asg"><div class="t" style="letter-spacing:0.2px">tyler stewar Participant</div><svg class="a" style="left:197.4px;top:10.2px" width="13.2" height="9.3" viewBox="0 0 13.2 9.3"><path d="M3 3 L6.6 6.3 L10.2 3" fill="none" stroke="#111" stroke-width="1.4" stroke-linecap="round" stroke-linejoin="round"/></svg></div><div class="act1" style="left:1577.85px"><svg width="14" height="14" viewBox="0 0 24 24" fill="none" stroke="#6b7280" stroke-width="2" stroke-linecap="round" stroke-linejoin="round"><path d="M11.5 20h-6.5a2 2 0 0 1 -2 -2v-9a2 2 0 0 1 2 -2h1a2 2 0 0 0 2 -2a1 1 0 0 1 1 -1h6a1 1 0 0 1 1 1a2 2 0 0 0 2 2h1a2 2 0 0 1 2 2v2.5"/><path d="M14.757 11.815a3 3 0 1 0 -3.431 4.109"/><path d="M18 18m-3 0a3 3 0 1 0 6 0a3 3 0 1 0 -6 0"/><path d="M20.2 20.2l1.8 1.8"/></svg></div></div>
<div class="a ln" style="top:609px"></div>
<div class="a row" style="top:609px"><div class="sel"><div class="cb" style="background:#1fb56c"><svg width="13" height="13" viewBox="0 0 13 13"><path d="M5 6.2 L6.5 7.5 L9.8 4.5" fill="none" stroke="#fff" stroke-width="1.35" stroke-linecap="round" stroke-linejoin="round"/></svg></div><div class="si" style="top:11px;left:18px"><svg width="14" height="9" viewBox="0 0 14 9" fill="none" stroke="#9ca3af" stroke-width="1.15" stroke-linecap="round" stroke-linejoin="round"><path d="M2.4 3.2 Q6.7 4.8 11 3.2"/><path d="M1.8 1.8 L2.4 3.2 L1.6 5.4 M12.4 1.9 L11 3.2 L12.4 5.6 M5.4 4.1 V6.6 M8.8 4.1 V6.8"/></svg></div><div class="st" style="">Off Market</div><svg class="a" style="left:175.2px;top:10px" width="12.8" height="9.3" viewBox="0 0 12.8 9.3"><path d="M3 3 L6.4 6.3 L9.8 3" fill="none" stroke="#111" stroke-width="1.4" stroke-linecap="round" stroke-linejoin="round"/></svg></div><div class="cell" style="left:227px"><span class="lnk" style="letter-spacing:0.15px">Mountain StripCenter GA</span></div><div class="cell" style="left:698px">macon, GA</div><div class="cell" style="left:856px">R-SC</div><div class="cell" style="left:1014px">$5,000,000</div><div class="cell" style="left:1173px"><span class="lnk">3</span></div><div class="cell" style="left:1243px">3</div><div class="asg"><div class="t" style="letter-spacing:0px">Tyler Stewart</div><svg class="a" style="left:197.4px;top:10.2px" width="13.2" height="9.3" viewBox="0 0 13.2 9.3"><path d="M3 3 L6.6 6.3 L10.2 3" fill="none" stroke="#111" stroke-width="1.4" stroke-linecap="round" stroke-linejoin="round"/></svg></div><div class="act1" style="left:1577.85px"><svg width="14" height="14" viewBox="0 0 24 24" fill="none" stroke="#6b7280" stroke-width="2" stroke-linecap="round" stroke-linejoin="round"><path d="M11.5 20h-6.5a2 2 0 0 1 -2 -2v-9a2 2 0 0 1 2 -2h1a2 2 0 0 0 2 -2a1 1 0 0 1 1 -1h6a1 1 0 0 1 1 1a2 2 0 0 0 2 2h1a2 2 0 0 1 2 2v2.5"/><path d="M14.757 11.815a3 3 0 1 0 -3.431 4.109"/><path d="M18 18m-3 0a3 3 0 1 0 6 0a3 3 0 1 0 -6 0"/><path d="M20.2 20.2l1.8 1.8"/></svg></div></div>
<div class="a stripe" style="top:655px;height:45px"></div>
<div class="a ln" style="top:654px"></div>
<div class="a row" style="top:655px"><div class="sel"><div class="cb" style="background:#1fb56c"><svg width="13" height="13" viewBox="0 0 13 13"><path d="M5 6.2 L6.5 7.5 L9.8 4.5" fill="none" stroke="#fff" stroke-width="1.35" stroke-linecap="round" stroke-linejoin="round"/></svg></div><div class="si" style="top:8.5px;left:19px"><svg width="13" height="13" viewBox="0 0 13 13"><circle cx="6.1" cy="6.1" r="6.1" fill="#1fb56c"/><path d="M4 6.4 L5.4 7.6 L8.9 4.6" fill="none" stroke="#fff" stroke-width="1.3" stroke-linecap="round" stroke-linejoin="round"/></svg></div><div class="st" style="letter-spacing:-0.35px">For Sale</div><svg class="a" style="left:175.2px;top:10px" width="12.8" height="9.3" viewBox="0 0 12.8 9.3"><path d="M3 3 L6.4 6.3 L9.8 3" fill="none" stroke="#111" stroke-width="1.4" stroke-linecap="round" stroke-linejoin="round"/></svg></div><div class="cell" style="left:227px"><span class="lnk" style="letter-spacing:-0.1px">Multi Family STD CA</span></div><div class="cell" style="left:698px">Los Angeles, CA</div><div class="cell" style="left:856px">MF-STD</div><div class="cell" style="left:1014px">$5,000,000</div><div class="cell" style="left:1173px"><span class="lnk">8</span></div><div class="cell" style="left:1243px">3</div><div class="asg"><div class="t" style="letter-spacing:0px">Tyler Stewart</div><svg class="a" style="left:197.4px;top:10.2px" width="13.2" height="9.3" viewBox="0 0 13.2 9.3"><path d="M3 3 L6.6 6.3 L10.2 3" fill="none" stroke="#111" stroke-width="1.4" stroke-linecap="round" stroke-linejoin="round"/></svg></div><div class="act1" style="left:1577.85px"><svg width="14" height="14" viewBox="0 0 24 24" fill="none" stroke="#6b7280" stroke-width="2" stroke-linecap="round" stroke-linejoin="round"><path d="M11.5 20h-6.5a2 2 0 0 1 -2 -2v-9a2 2 0 0 1 2 -2h1a2 2 0 0 0 2 -2a1 1 0 0 1 1 -1h6a1 1 0 0 1 1 1a2 2 0 0 0 2 2h1a2 2 0 0 1 2 2v2.5"/><path d="M14.757 11.815a3 3 0 1 0 -3.431 4.109"/><path d="M18 18m-3 0a3 3 0 1 0 6 0a3 3 0 1 0 -6 0"/><path d="M20.2 20.2l1.8 1.8"/></svg></div></div>
<div class="a ln" style="top:700px"></div>
<div class="a row" style="top:701px"><div class="sel"><div class="cb" style="background:#1fb56c"><svg width="13" height="13" viewBox="0 0 13 13"><path d="M5 6.2 L6.5 7.5 L9.8 4.5" fill="none" stroke="#fff" stroke-width="1.35" stroke-linecap="round" stroke-linejoin="round"/></svg></div><div class="si" style="top:8.5px;left:19px"><svg width="13" height="13" viewBox="0 0 13 13"><circle cx="6.1" cy="6.1" r="6.1" fill="#1fb56c"/><path d="M4 6.4 L5.4 7.6 L8.9 4.6" fill="none" stroke="#fff" stroke-width="1.3" stroke-linecap="round" stroke-linejoin="round"/></svg></div><div class="st" style="letter-spacing:-0.35px">For Sale</div><svg class="a" style="left:175.2px;top:10px" width="12.8" height="9.3" viewBox="0 0 12.8 9.3"><path d="M3 3 L6.4 6.3 L9.8 3" fill="none" stroke="#111" stroke-width="1.4" stroke-linecap="round" stroke-linejoin="round"/></svg></div><div class="cell" style="left:227px"><span class="lnk" style="letter-spacing:0.28px">Mountain Industrial Conditional</span></div><div class="cell" style="left:698px">opelika, AL</div><div class="cell" style="left:856px">I-HI</div><div class="cell" style="left:1014px">$5,000,000</div><div class="cell" style="left:1173px"><span class="lnk">1</span></div><div class="cell" style="left:1243px">0</div><div class="asg"><div class="t" style="letter-spacing:0px">Tyler Stewart</div><svg class="a" style="left:197.4px;top:10.2px" width="13.2" height="9.3" viewBox="0 0 13.2 9.3"><path d="M3 3 L6.6 6.3 L10.2 3" fill="none" stroke="#111" stroke-width="1.4" stroke-linecap="round" stroke-linejoin="round"/></svg></div><div class="act1" style="left:1577.85px"><svg width="14" height="14" viewBox="0 0 24 24" fill="none" stroke="#6b7280" stroke-width="2" stroke-linecap="round" stroke-linejoin="round"><path d="M11.5 20h-6.5a2 2 0 0 1 -2 -2v-9a2 2 0 0 1 2 -2h1a2 2 0 0 0 2 -2a1 1 0 0 1 1 -1h6a1 1 0 0 1 1 1a2 2 0 0 0 2 2h1a2 2 0 0 1 2 2v2.5"/><path d="M14.757 11.815a3 3 0 1 0 -3.431 4.109"/><path d="M18 18m-3 0a3 3 0 1 0 6 0a3 3 0 1 0 -6 0"/><path d="M20.2 20.2l1.8 1.8"/></svg></div></div>
<div class="a" style="left:1827px;top:864px;width:61px;height:61px;border-radius:50%;background:#fff;box-shadow:0 2px 8px rgba(0,0,0,.12)"></div>
<div class="a" style="left:1830px;top:867px;width:55px;height:55px;border-radius:50%;background:#1cb46b"></div>
<svg class="a" style="left:1844px;top:882px" width="28" height="26" viewBox="0 0 28 26"><path d="M13.5 1 C20.5 1 26 5.2 26 11 C26 13.5 25 15.5 23.3 17 L24.5 24.5 L17.5 21 C16.2 21.3 14.9 21.5 13.5 21.5 C6.5 21.5 1 16.8 1 11 C1 5.2 6.5 1 13.5 1z" fill="#fff"/><path d="M7 8.5 H20.5 M7 13.5 H16" stroke="#1cb46b" stroke-width="2.4" stroke-linecap="round"/></svg>

<div class="a" style="left:0;top:0;width:1911px;height:947px;border-radius:7px 8px 4px 3px / 4px 8px 7px 3px;box-shadow:0 0 0 12px #333;pointer-events:none"></div>
</body></html>
